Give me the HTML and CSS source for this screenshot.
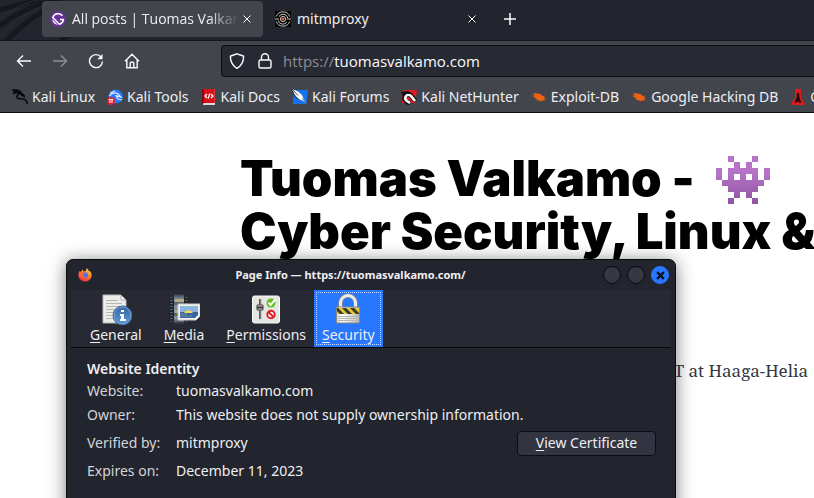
FILE: index.html
```html
<!DOCTYPE html>
<html lang="en">
<head>
<meta charset="utf-8">
<title>All posts | Tuomas Valkamo</title>
<link rel="stylesheet" href="styles.css">
</head>
<body>
<div class="browser">
  <header class="chrome">
    <div class="tabstrip">
      <svg class="dragon-art" viewBox="0 0 120 40" aria-hidden="true"><g fill="none" stroke="#17181e" stroke-width="5"><path d="M-4 10Q22 6 45-4M-4 29Q20 8 60-2M5 43Q26 18 62 1M60 42Q68 34 82 32"/></g><path d="M-2 19Q18 4 44-2M-2 38Q18 14 50 3" fill="none" stroke="#2b2d35" stroke-width="1"/></svg>
      <div class="tab tab-active">
        <svg class="icon16" viewBox="0 0 16 16" aria-hidden="true"><circle cx="8" cy="8" r="8" fill="#663399"/><path d="M2.2 8.2 7.8 13.8A5.8 5.8 0 0 1 2.2 8.2Z" fill="#fff"/><path d="M12.4 4.7A5.6 5.6 0 0 0 2.8 6.6L9.4 13.2A5.6 5.6 0 0 0 13.4 8.4H10" fill="none" stroke="#fff" stroke-width="1.5"/></svg>
        <span class="tab-title">All posts | Tuomas Valkamo</span>
        <button class="tab-close" aria-label="Close tab"><svg viewBox="0 0 8 8"><path d="M0.5 0.5 7.5 7.5M7.5 0.5 0.5 7.5"/></svg></button>
      </div>
      <div class="tab">
        <svg class="icon16" viewBox="0 0 16 16" aria-hidden="true"><path fill="#050505" d="M0 0H16V16H0Z"/><g fill="none" stroke="#c9c4bd"><path d="M1.2 5.5A7.3 7.3 0 0 1 14.8 5.5M1.2 10.5A7.3 7.3 0 0 0 14.8 10.5M0 8H4M12 8H16"/><path d="M4 5.5A4.8 4.8 0 0 1 12.8 7M3.2 9.5A4.8 4.8 0 0 0 12 10.8"/><circle cx="8" cy="8" r="2.6"/></g><circle cx="8" cy="8" r="1.5" fill="#e8602c"/></svg>
        <span class="tab-title">mitmproxy</span>
        <button class="tab-close" aria-label="Close tab"><svg viewBox="0 0 8 8"><path d="M0.5 0.5 7.5 7.5M7.5 0.5 0.5 7.5"/></svg></button>
      </div>
      <button class="new-tab" aria-label="New tab"><svg viewBox="0 0 12 12"><path d="M6 0V12M0 6H12"/></svg></button>
    </div>
    <nav class="toolbar" aria-label="Navigation">
      <button class="nav-button" aria-label="Back"><svg viewBox="0 0 16 16"><path d="M15 8H1.5M7 2.5 1.5 8 7 13.5"/></svg></button>
      <button class="nav-button nav-disabled" aria-label="Forward" disabled><svg viewBox="0 0 16 16"><path d="M1 8H14.5M9 2.5 14.5 8 9 13.5"/></svg></button>
      <button class="nav-button" aria-label="Reload"><svg viewBox="0 0 16 16"><path d="M13.2 4.2A6.5 6.5 0 1 0 14.5 8.5"/><path d="M14.5 1V6.2H9.3Z" fill="#fbfbfe" stroke="none"/></svg></button>
      <button class="nav-button" aria-label="Home"><svg viewBox="0 0 16 16"><path d="M1 8.2 8 1.2 15 8.2M2.8 7V14.7H13.2V7M6.2 14.5V10.2Q6.2 9.2 7.2 9.2H8.8Q9.8 9.2 9.8 10.2V14.5"/></svg></button>
      <div class="urlbar">
        <svg class="url-icon" viewBox="0 0 16 16" aria-hidden="true"><path d="M8 .8 14.2 3Q14.6 3.2 14.6 4 14.4 11.5 8 15.3 1.6 11.5 1.4 4 1.4 3.2 1.8 3Z"/></svg>
        <svg class="url-icon" viewBox="0 0 16 16" aria-hidden="true"><rect x="2" y="7" width="12" height="8" rx="1.5"/><path d="M4.5 7V4.3A3.5 3.5 0 0 1 11.5 4.3V7"/></svg>
        <a class="url" href="#"><span class="scheme">https://</span>tuomasvalkamo.com</a>
      </div>
    </nav>
    <nav class="bookmarks" aria-label="Bookmarks">
      <a href="#"><svg class="icon16" viewBox="0 0 16 16"><path d="M0 1.2Q6 .2 9 3.2M1 4.4Q6 2.6 9.5 4.2L12.5 7M9.5 4.2Q4 5.6 5 8.4 6 10.2 10 9.8 15 10 15.2 15.2M1.5 2.8 5 2.4M9 6 13 7.5" fill="none" stroke="#050505" stroke-width="1.5"/></svg>Kali Linux</a>
      <a href="#"><svg class="icon16" viewBox="0 0 16 16"><circle cx="8.7" cy="7.5" r="7" fill="#2777ff"/><path d="M2 7Q7 2 11 5L14 8 9 6.7 11 10 15 11M3 4 8 2" fill="none" stroke="#dce9ff" stroke-width="1.2"/><circle cx="4" cy="12" r="4" fill="#e3202b"/><path d="M1.8 10.4H6.2M3 10.5V14M5 10.5V14" stroke="#fff" fill="none"/></svg>Kali Tools</a>
      <a href="#"><svg class="icon16" viewBox="-1 0 16 16"><path d="M1 0H13V16H1Z" fill="#d8dae0"/><path d="M0 0H12.8V14H0Z" fill="#da1016"/><path d="M0 0H2V14L0 15Z" fill="#820b18"/><path d="M5 5 3 7 5 9M9 5 11 7 9 9M7.8 4.5 6.2 9.5" fill="none" stroke="#fff" stroke-width="1.3"/></svg>Kali Docs</a>
      <a href="#"><svg class="icon16" viewBox="0 0 16 16"><path d="M2 1H16L14.5 15H1Z" fill="#1673ef"/><path d="M0 0 6 2.5 10 6 11.5 9.5 15 15 10.5 11.5 6.5 10 3 6Z" fill="#fff"/><path d="M0 0 6 6.5M10.5 9.5 14.5 14.5M0 2 3.5 8 7 10.5" stroke="#222" stroke-width=".8" fill="none"/></svg>Kali Forums</a>
      <a href="#"><svg class="icon16" viewBox="0 0 16 16"><path d="M2 1H16L14 14H1Z" fill="#df1925"/><path d="M14.5 12 10 6.5Q7 4 4.5 7T5.5 12.5L9 14.5" fill="none" stroke="#111" stroke-width="4.5"/><path d="M14 12 10 7Q7 4.5 5 7T6 12L9 14" fill="none" stroke="#fff" stroke-width="2.6"/><path d="M0 3 7 2 11 4.5 5 5 2 8Z" fill="#111"/></svg>Kali NetHunter</a>
      <a href="#"><svg class="icon16" viewBox="0 0 16 16"><path d="M1.5 3.5 4 5 4.2 3.4 6 4.6 9.5 5 12 7.2 14 6.6 13 8.4 15.5 10 13 10 14 12 11.2 11.2 9.5 12.4 8 11.2 5.5 11.4 6 10 3.5 9.6 4.6 8.4 0 6.6 3.6 6.8Z" fill="#f0600f"/></svg>Exploit-DB</a>
      <a href="#"><svg class="icon16" viewBox="0 0 16 16"><path d="M1.5 3.5 4 5 4.2 3.4 6 4.6 9.5 5 12 7.2 14 6.6 13 8.4 15.5 10 13 10 14 12 11.2 11.2 9.5 12.4 8 11.2 5.5 11.4 6 10 3.5 9.6 4.6 8.4 0 6.6 3.6 6.8Z" fill="#f0600f"/></svg>Google Hacking DB</a>
      <a href="#"><svg class="icon16" viewBox="0 0 16 16"><path d="M5 0H11V9L14.5 14V16H1.5V14L5 9Z" fill="#e0191c"/><path d="M7 4H9L9.5 9 11.5 13.5H9L8 12 7 13.5H4.5L6.5 9Z" fill="#240b0e"/></svg>OffSec</a>
    </nav>
  </header>
  <main class="page">
    <h1>Tuomas Valkamo - <svg class="invader" viewBox="0 0 9 8" role="img" aria-label="Alien monster"><defs><linearGradient id="inv" x2="0" y2="1"><stop offset=".35" stop-color="#b574c5"/><stop offset="1" stop-color="#8e52a1"/></linearGradient></defs><path fill="url(#inv)" d="M2 0H3V1H4V2H5V1H6V0H7V1H6V2H7V4H8V2H9V4H8V5H7V6H6V7H7V8H6V7H5V6H4V7H3V8H2V7H3V6H2V5H1V4H0V2H1V4H2V2H3V1H2ZM3 3V4H4V3ZM5 3V4H6V3Z" fill-rule="evenodd"/></svg><br>Cyber Security, Linux &amp;</h1>
    <p class="bio">IT at Haaga-Helia</p>
  </main>
</div>

<section class="dialog" role="dialog" aria-labelledby="dialog-title">
  <div class="titlebar">
    <svg class="firefox" viewBox="0 0 16 16" aria-hidden="true"><defs><linearGradient id="fx" x1=".8" y1="0" x2=".3" y2="1"><stop stop-color="#ffe04b"/><stop offset=".5" stop-color="#ff7a2a"/><stop offset="1" stop-color="#f0264f"/></linearGradient></defs><path d="M2 3 3.2 4.5 5.5 1.5 6 4 9 3.5 10 0Q12 2 12.6 4L13.5 3.2Q16 6 15.6 9A7.7 7.7 0 0 1 .4 9Q0 6 2 3Z" fill="url(#fx)"/><circle cx="8" cy="8.3" r="3.5" fill="#4575e8"/><path d="M2 5Q6 3.5 8.5 6 5.5 6.2 5 8 6 11 10 10 7 13 4 10.5Z" fill="#ff6a2c"/></svg>
    <h2 id="dialog-title">Page Info — https://tuomasvalkamo.com/</h2>
    <div class="window-buttons">
      <button aria-label="Minimize"></button>
      <button aria-label="Maximize"></button>
      <button class="close" aria-label="Close"><svg viewBox="0 0 8 8"><path d="M1 1 7 7M7 1 1 7"/></svg></button>
    </div>
  </div>
  <div class="categories" role="tablist">
    <button class="category" role="tab"><svg viewBox="0 0 32 32"><defs><linearGradient id="blue" x2="0" y2="1"><stop stop-color="#3465a4"/><stop offset="1" stop-color="#5d9bd5"/></linearGradient></defs><path d="M3 2H21L26 7V30H3Z" fill="#ecece8" stroke="#b7b8b3"/><path d="M21 2V7H26Z" fill="#fff" stroke="#aaa"/><path d="M6 7.5H18M6 10.5H22M6 13.5H22M6 16.5H17M6 19.5H14M6 22.5H13M6 25.5H13" stroke="#b4b5b0"/><circle cx="22.5" cy="22.5" r="9.5" fill="url(#blue)" stroke="#3465a4"/><circle cx="22.5" cy="22.5" r="8.5" fill="none" stroke="#729fcf"/><path d="M21 17H24V19H21ZM20 21H24V26H26V28H20V26H21V23H20Z" fill="#fff"/></svg><span><u>G</u>eneral</span></button>
    <button class="category" role="tab"><svg viewBox="0 0 32 32"><defs><linearGradient id="film" x2="0" y2="1"><stop stop-color="#272933"/><stop offset=".2" stop-color="#272933" stop-opacity="0"/><stop offset=".8" stop-color="#272933" stop-opacity="0"/><stop offset="1" stop-color="#272933"/></linearGradient></defs><path d="M1 1H21V31H1Z" fill="#22262a"/><path d="M6 1H16V31H6Z" fill="#59636b"/><path d="M6 2H16V9H6ZM6 12H16V20H6ZM6 23H16V29H6Z" fill="#7f90a2"/><path d="M7 6H16V9H7ZM7 17H16V20H7Z" fill="#b3ab84"/><path d="M3.5 1V31M18.5 1V31" stroke="#77796f" stroke-width="2" stroke-dasharray="1 2"/><path d="M1 0H21V32H1Z" fill="url(#film)"/><path d="M10 11H32V23L28 27H10Z" fill="#f1f2ef" stroke="#ccc"/><path d="M12 13H30V19H12Z" fill="#8db4da"/><path d="M12 19H30V22L27 25H12Z" fill="#3465a4"/><path d="M16 20A5 5 0 0 1 25 20Z" fill="#f6db58"/><path d="M12 20H19V22H24V24H12Z" fill="#547aa0"/><path d="M27 27Q28 23 32 23Z" fill="#fff"/></svg><span><u>M</u>edia</span></button>
    <button class="category" role="tab"><svg viewBox="0 0 32 32"><rect x="2.5" y="3" width="27" height="27" rx="2" fill="#e5e5e2" stroke="#fafafa"/><path d="M10 6V26" stroke="#555753" stroke-width="2"/><path d="M11 6V26" stroke="#aaa"/><path d="M7 12H13V17H7Z" fill="#d4d5d2" stroke="#444"/><path d="M7 14.5H13" stroke="#333" stroke-width="2"/><circle cx="21" cy="10" r="4.5" fill="#68bd20"/><path d="M18.5 9.5 20.5 12 25.5 6.5" fill="none" stroke="#fff" stroke-width="2"/><circle cx="21" cy="21.5" r="3.7" fill="#fff" stroke="#dc1e28" stroke-width="2"/><path d="M18.5 19 23.5 24" stroke="#dc1e28" stroke-width="2"/></svg><span><u>P</u>ermissions</span></button>
    <button class="category selected" role="tab" aria-selected="true"><svg viewBox="0 0 32 32"><defs><linearGradient id="lock"><stop stop-color="#d7d8d3"/><stop offset=".25" stop-color="#fff"/><stop offset="1" stop-color="#b6b7b3"/></linearGradient><clipPath id="band"><path d="M5 15H27V21H5Z"/></clipPath></defs><path d="M8.5 16V10A7.5 7.5 0 0 1 23.5 10V16" fill="none" stroke="#85878a" stroke-width="4.5"/><path d="M8.5 16V10A7.5 7.5 0 0 1 23.5 10V16" fill="none" stroke="#ecece9" stroke-width="3"/><path d="M4.5 14H27.5V30H4.5Z" fill="url(#lock)" stroke="#858783"/><path d="M5 15H27V21H5Z" fill="#e8c936"/><g clip-path="url(#band)" stroke="#3c3b29" stroke-width="3"><path d="M3 14 11 22M11 14 19 22M19 14 27 22"/></g><path d="M6 23.5H26M6 25.5H26M6 27.5H26" stroke="#b5b6b2"/></svg><span><u>S</u>ecurity</span></button>
  </div>
  <div class="panel">
    <h3>Website Identity</h3>
    <dl class="identity">
      <dt>Website:</dt><dd>tuomasvalkamo.com</dd>
      <dt>Owner:</dt><dd>This website does not supply ownership information.</dd>
      <dt>Verified by:</dt><dd class="with-action">mitmproxy <button class="certificate"><u>V</u>iew Certificate</button></dd>
      <dt>Expires on:</dt><dd>December 11, 2023</dd>
    </dl>
  </div>
</section>
</body>
</html>
```
FILE: styles.css
```css
* { box-sizing: border-box; }
body {
  margin: 0;
  height: 100vh;
  overflow: hidden;
  position: relative;
  background: #fff;
  color: #eeeef2;
  font: 14px/20px "Noto Sans", "Open Sans", sans-serif;
}
button { padding: 0; border: 0; background: none; color: inherit; font: inherit; }
a { color: inherit; text-decoration: none; }
svg { display: block; flex: none; }
.icon16 { width: 16px; height: 16px; }

.chrome { background: #42454c; border-bottom: 1px solid #0c0c10; }
.tabstrip {
  position: relative;
  display: flex;
  height: 41px;
  padding: 1px 0 3px 42px;
  background: #23252e;
  border-bottom: 1px solid #15161b;
}
.dragon-art { position: absolute; left: 0; top: 0; width: 120px; height: 40px; }
.tab {
  position: relative;
  display: flex;
  align-items: center;
  gap: 6px;
  width: 221px;
  padding: 0 8px;
  border-radius: 4px;
}
.tab + .tab { margin-left: 4px; }
.tab-active { background: #42454c; }
.tab-title { flex: 1; min-width: 0; margin-right: -6px; overflow: hidden; white-space: nowrap; }
.tab-active .tab-title {
  font-family: "Open Sans", "Noto Sans", sans-serif;
  mask-image: linear-gradient(to right, #000 82%, transparent);
}
.tab-close { display: grid; place-items: center; width: 16px; height: 20px; }
.tab-close svg { width: 8px; height: 8px; stroke: #fbfbfe; fill: none; }
.new-tab { width: 40px; display: grid; place-items: center; margin-left: 2px; }
.new-tab svg { width: 12px; height: 12px; stroke: #fbfbfe; stroke-width: 1.5; }

.toolbar { display: flex; align-items: center; height: 40px; padding-left: 6px; }
.nav-button { width: 36px; height: 32px; display: grid; place-items: center; }
.nav-button svg { width: 16px; height: 16px; fill: none; stroke: #fbfbfe; stroke-width: 1.4; }
.nav-disabled { opacity: .4; }
.urlbar {
  flex: 1;
  display: flex;
  align-items: center;
  gap: 12px;
  height: 32px;
  margin-left: 71px;
  padding-left: 7px;
  background: #272933;
  border: 1px solid #0d0e13;
  border-right: 0;
  border-radius: 4px 0 0 4px;
}
.url-icon { width: 16px; height: 16px; fill: none; stroke: #fbfbfe; stroke-width: 1.4; }
.url { margin-left: -2px; font: 15px/20px "Open Sans", "Noto Sans", sans-serif; color: #fbfbfe; }
.scheme { color: #8d8e96; }

.bookmarks { display: flex; gap: 12px; height: 31px; padding-left: 12px; overflow: hidden; white-space: nowrap; }
.bookmarks a { display: flex; flex: none; align-items: center; gap: 4px; }

.page { padding: 39px 0 0 240px; color: #000; white-space: nowrap; }
h1 { margin: 0; font: 900 49px/53px Inter, sans-serif; }
.invader { display: inline-block; width: 54px; height: 48px; margin-left: 11px; vertical-align: -8px; }
.bio { margin: 99px 0 0; padding-right: 6px; text-align: right; font: 17px/28px "Noto Serif", "DejaVu Serif", serif; color: #333842; }

.dialog {
  position: absolute;
  left: 66px;
  right: 138px;
  top: 259px;
  bottom: -20px;
  padding: 0 4px;
  background: #23252e;
  border: 1px solid #0b0c10;
  border-radius: 7px 7px 0 0;
  box-shadow: 0 2px 18px rgba(0, 0, 0, .5);
}
.titlebar { display: flex; align-items: center; height: 30px; padding: 0 2px 0 7px; }
.firefox { width: 14px; height: 14px; }
h2 { flex: 1; margin: 0 0 0 6px; text-align: center; font-size: 11px; line-height: 20px; font-weight: 700; }
.window-buttons { display: flex; gap: 6px; }
.window-buttons button { width: 18px; height: 18px; border-radius: 50%; background: #353842; border: 1px solid #08090b; }
.window-buttons .close { display: grid; place-items: center; background: #2777ff; border-color: #2777ff; }
.close svg { width: 9px; height: 9px; stroke: #0c1020; stroke-width: 2; }

.categories { display: flex; background: #272933; border-bottom: 1px solid #08090b; padding-left: 8px; height: 58px; }
.category { display: flex; flex-direction: column; align-items: center; justify-content: flex-start; padding: 2px 10px; border: 1px solid transparent; }
.category svg { width: 32px; height: 32px; }
.selected { margin-left: -3px; padding: 2px 7px; background: #2777ff; outline: 1px dotted #c8dcff; outline-offset: -3px; }
u { text-decoration: underline; text-underline-offset: 2px; }

.panel { padding: 11px 15px 11px 16px; }
h3 { margin: 0; font-size: 14px; line-height: 20px; font-weight: 600; }
.identity { display: grid; grid-template-columns: 89px 1fr; align-items: center; margin: 0; grid-template-rows: 24px 24px 32px 24px; }
dt { color: #d3d4da; }
dd { margin: 0; }
.with-action { display: flex; justify-content: space-between; align-items: center; }
.certificate { width: 139px; height: 25px; background: #323541; border: 1px solid #0c0d12; border-radius: 4px; }
```
